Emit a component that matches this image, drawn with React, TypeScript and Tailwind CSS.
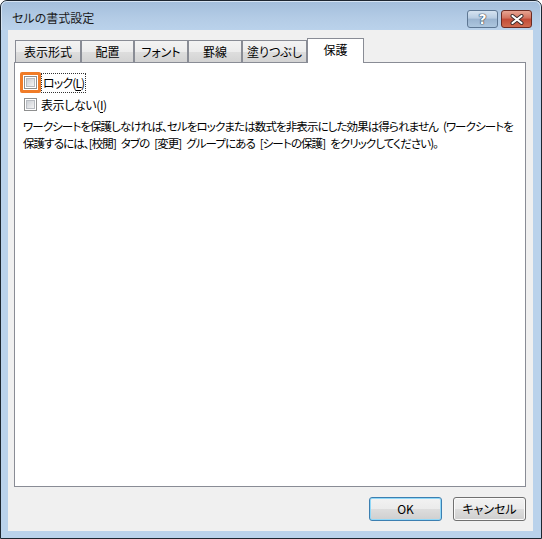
import React from "react";

const tabs = [
  { label: "表示形式", w: "w-[66px]" },
  { label: "配置", w: "w-[53px]" },
  { label: "フォント", w: "w-[54px]" },
  { label: "罫線", w: "w-[54px]" },
  { label: "塗りつぶし", w: "w-[65px]" },
];

function CheckBox() {
  return (
    <div className="w-[13px] h-[13px] border border-[#8e8f8f] bg-white flex items-center justify-center shrink-0">
      <div className="w-[9px] h-[9px] border border-[#b8bcc2] bg-[linear-gradient(135deg,#cbcfd5,#f4f4f4)]" />
    </div>
  );
}

export default function App() {
  return (
    <div className="w-[542px] h-[539px] font-['Noto_Sans_CJK_JP',sans-serif] [font-feature-settings:'palt'] text-[12px] text-black">
      <div className="w-full h-full border border-[#1d2630] rounded-t-[7px] bg-[#bad2eb] flex flex-col overflow-hidden">
        {/* title bar */}
        <div className="h-[29px] shrink-0 flex items-start bg-[linear-gradient(to_bottom,#a4bfdc,#b4cce6_60%,#bad2eb)] border-t border-l border-r border-[#d6e4f3] rounded-t-[6px]">
          <div className="pl-[10px] pt-[9px] leading-[14px] text-[12px] text-[#1b1b1b]">セルの書式設定</div>
          <div className="ml-auto flex gap-[3px] pt-[8px] pr-[8px]">
            <div className="w-[31px] h-[18px] rounded-[3px] border border-[#5e7793] bg-[linear-gradient(to_bottom,#d5e3f1,#b7cce2_45%,#9ab4d0_50%,#adc6de)] flex items-center justify-center">
              <span className="text-[14px] font-bold leading-none text-white [text-shadow:0_0_1px_#2b3a4a,0_0_1px_#2b3a4a,0_0_1px_#2b3a4a] font-['DejaVu_Sans',sans-serif]">?</span>
            </div>
            <div className="w-[31px] h-[18px] rounded-[3px] border border-[#6b2a22] bg-[linear-gradient(to_bottom,#e8a593,#d2715d_45%,#c24a36_50%,#d06b50)] flex items-center justify-center">
              <svg width="14" height="11" viewBox="0 0 14 11">
                <path d="M2.5 2 L11.5 9 M11.5 2 L2.5 9" stroke="#3a2b2b" strokeWidth="4" strokeLinecap="round" />
                <path d="M2.5 2 L11.5 9 M11.5 2 L2.5 9" stroke="#ffffff" strokeWidth="2.2" strokeLinecap="round" />
              </svg>
            </div>
          </div>
        </div>
        {/* body with frame */}
        <div className="flex-1 flex pl-[7px] pr-[8px] pb-[7px]">
          <div className="w-[525px] h-[501px] bg-[#f0f0f0] flex flex-col pl-[6px] pt-[8px]">
            {/* tab strip */}
            <div className="h-[24px] flex items-end pl-[1px] relative z-10">
              {tabs.map((t) => (
                <div
                  key={t.label}
                  className={`${t.w} h-[22px] border border-b-0 border-[#898c95] bg-[linear-gradient(to_bottom,#f3f3f3,#ececec_50%,#dedede_50%,#d3d3d3)] flex items-center justify-center leading-none`}
                >
                  {t.label}
                </div>
              ))}
              <div className="w-[57px] h-[25px] mb-[-1px] border border-b-0 border-[#898c95] bg-white flex items-center justify-center leading-none pb-[2px]">
                保護
              </div>
            </div>
            {/* panel */}
            <div className="w-[512px] h-[425px] border border-[#898c95] bg-white flex flex-col pl-[5px] pt-[9px]">
              <div className="flex items-start h-[21px]">
                <div className="w-[21px] h-[21px] border-[3px] border-[#f07c28] rounded-[2px] flex items-center justify-center">
                  <CheckBox />
                </div>
                <div className="h-[20px] mt-[1px] border border-dotted border-[#333] flex items-center pl-[1px] pr-[1px] leading-none tracking-[-0.9px]">
                  ロック(<span className="underline underline-offset-2">L</span>)
                </div>
              </div>
              <div className="flex items-center h-[15px] mt-[4px] pl-[4px]">
                <CheckBox />
                <span className="ml-[4px] leading-none tracking-[-0.4px]">
                  表示しない(<span className="underline underline-offset-2">I</span>)
                </span>
              </div>
              <div className="mt-[6px] ml-[3px] leading-[17px] whitespace-nowrap text-[11.5px] tracking-[-0.9px]">
                ワークシートを保護しなければ、セルをロックまたは数式を非表示にした効果は得られません{"\u2002"}(ワークシートを
                <br />
                保護するには、[校閲]{"\u2002"}タブの{"\u2002"}[変更]{"\u2002"}グループにある{"\u2002"}[シートの保護]{"\u2002"}をクリックしてください)。
              </div>
            </div>
            {/* buttons */}
            <div className="flex justify-end gap-[11px] mt-[10px] pr-[7px]">
              <div className="w-[73px] h-[24px] rounded-[3px] border border-[#3c7fb1] shadow-[inset_0_0_0_1px_#90d8f8] bg-[linear-gradient(to_bottom,#f2f2f2,#ebebeb_50%,#dddddd_50%,#cfcfcf)] flex items-center justify-center leading-none">
                OK
              </div>
              <div className="w-[73px] h-[24px] rounded-[3px] border border-[#707070] shadow-[inset_0_0_0_1px_#fbfbfb] bg-[linear-gradient(to_bottom,#f2f2f2,#ebebeb_50%,#dddddd_50%,#cfcfcf)] flex items-center justify-center leading-none">
                キャンセル
              </div>
            </div>
          </div>
        </div>
      </div>
    </div>
  );
}
